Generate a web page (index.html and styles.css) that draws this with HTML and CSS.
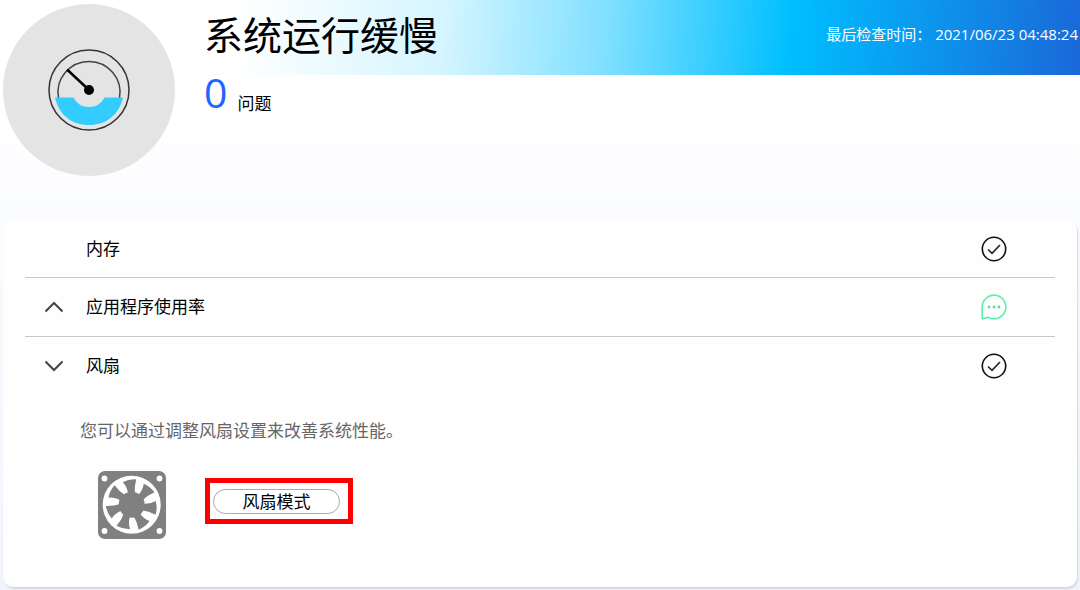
FILE: index.html
```
<!DOCTYPE html>
<html lang="zh-CN">
<head>
<meta charset="utf-8">
<meta name="viewport" content="width=device-width, initial-scale=1">
<title>系统运行缓慢</title>
<link rel="stylesheet" href="styles.css">
</head>
<body>
<header class="hero">
  <div class="badge">
    <svg class="gauge" viewBox="0 0 82 82" aria-hidden="true">
      <circle cx="41" cy="41" r="40" fill="none" stroke="#333" stroke-width="1.500"/>
      <path d="M10.500 49 A31 31 0 1 1 71.500 49" fill="none" stroke="#444" stroke-width="1.500"/>
      <path d="M7 48.500 H25.500 C29 55 34 58 41 58 C48 58 53 55 56.500 48.500 H75 C71 66 58 76 41 76 C24 76 11 66 7 48.500 Z" fill="#33ccff"/>
      <path d="M19 20.500 L41 41" stroke="#000" stroke-width="2.500"/>
      <circle cx="41" cy="41" r="5" fill="#000"/>
    </svg>
  </div>
  <div class="summary">
    <div class="title-row">
      <h1 class="title">系统运行缓慢</h1>
      <p class="checked"><span>最后检查时间：</span><time datetime="2021-06-23T04:48:24">2021/06/23 04:48:24</time></p>
    </div>
    <p class="issues"><span class="count">0</span><span class="unit">问题</span></p>
  </div>
</header>

<main class="card">
  <div class="row">
    <span class="toggle-space"></span>
    <span class="name">内存</span>
    <svg class="status" viewBox="0 0 26 26" role="img" aria-label="正常"><circle cx="13" cy="13" r="11.700" fill="none" stroke="#111" stroke-width="1.600"/><path d="M7 13.500 L11 17.300 L19 9" fill="none" stroke="#222" stroke-width="1.600"/></svg>
  </div>
  <div class="row">
    <button class="toggle" type="button" aria-label="应用程序使用率" aria-expanded="false"><svg class="chevron" viewBox="0 0 20 12" aria-hidden="true"><path d="M1.500 10.500 L10 2 L18.500 10.500"/></svg></button>
    <span class="name">应用程序使用率</span>
    <svg class="status" viewBox="0 0 26 26" role="img" aria-label="消息"><path d="M1.200 24.800 V13 A11.800 11.800 0 1 1 7.500 23.400 Z" fill="none" stroke="#5cf0a5" stroke-width="1.600" stroke-linejoin="round"/><g fill="#5cdd9a"><circle cx="8" cy="13" r="1.400"/><circle cx="13" cy="13" r="1.400"/><circle cx="18" cy="13" r="1.400"/></g></svg>
  </div>
  <div class="row">
    <button class="toggle" type="button" aria-label="风扇" aria-expanded="true"><svg class="chevron" viewBox="0 0 20 12" aria-hidden="true"><path d="M1.500 1.500 L10 10 L18.500 1.500"/></svg></button>
    <span class="name">风扇</span>
    <svg class="status" viewBox="0 0 26 26" role="img" aria-label="正常"><circle cx="13" cy="13" r="11.700" fill="none" stroke="#111" stroke-width="1.600"/><path d="M7 13.500 L11 17.300 L19 9" fill="none" stroke="#222" stroke-width="1.600"/></svg>
  </div>
  <section class="detail">
    <p class="hint">您可以通过调整风扇设置来改善系统性能。</p>
    <div class="fan-row">
      <svg class="fan" viewBox="0 0 68 68" aria-hidden="true">
        <rect width="68" height="68" rx="7" fill="#808080"/>
        <g fill="#fff"><circle cx="6.500" cy="7.500" r="2.900"/><circle cx="61.500" cy="7.500" r="2.900"/><circle cx="6.500" cy="60" r="2.900"/><circle cx="61.500" cy="60" r="2.900"/><circle cx="33.700" cy="33.700" r="29"/></g>
        <g fill="#808080" transform="translate(33.700 33.700)">
          <circle r="13"/>
          <path id="blade" d="M-3.500 -11 Q-4.500 -18 -9 -22.500 Q-3 -26 4.500 -25.500 Q2.500 -18 3.200 -11 Z"/>
          <use href="#blade" transform="rotate(51.430)"/>
          <use href="#blade" transform="rotate(102.860)"/>
          <use href="#blade" transform="rotate(154.290)"/>
          <use href="#blade" transform="rotate(205.710)"/>
          <use href="#blade" transform="rotate(257.140)"/>
          <use href="#blade" transform="rotate(308.570)"/>
        </g>
      </svg>
      <div class="highlight"><button class="mode" type="button">风扇模式</button></div>
    </div>
  </section>
</main>
</body>
</html>
```

FILE: styles.css
```
* { box-sizing: border-box; }

body {
  margin: 0;
  min-height: 100vh;
  padding-bottom: 3px;
  display: flex;
  flex-direction: column;
  background: linear-gradient(#fff 0, #fefeff 140px, #fbfcff 210px, #f2f4fb 100%);
  color: #000;
  font-family: "Noto Sans", "Noto Sans CJK SC", sans-serif;
  font-size: 17px;
  line-height: 24px;
}

h1, p { margin: 0; }

button {
  font: inherit;
  color: inherit;
  cursor: pointer;
}

.hero {
  display: grid;
  grid-template-columns: 172px 1fr;
  column-gap: 29px;
  padding: 0 2px 0 3px;
  min-height: 220px;
  background: linear-gradient(94deg, #fff 22%, #d5f5ff 41%, #80e0ff 56%, #00bfff 73%, #1a68d9 100%) top / 100% 75px no-repeat;
}

.badge {
  height: 172px;
  margin-top: 4px;
  border-radius: 50%;
  background: #e4e4e4;
  display: flex;
  align-items: center;
  justify-content: center;
}

.gauge { width: 82px; height: 82px; }

.title-row {
  height: 75px;
  display: flex;
  justify-content: space-between;
  align-items: flex-start;
}

.title {
  padding-top: 5px;
  font-size: 39px;
  font-weight: 400;
  line-height: 56px;
  font-family: "Noto Sans CJK SC", sans-serif;
}

.checked {
  display: flex;
  gap: 4px;
  padding-top: 22px;
  color: #fff;
  font-family: "Open Sans", "Noto Sans CJK SC", sans-serif;
  font-size: 15px;
  white-space: nowrap;
}

.issues {
  display: flex;
  align-items: flex-start;
  gap: 10px;
}

.count {
  color: #1f66ff;
  font-family: "Open Sans", sans-serif;
  font-size: 41px;
  line-height: 34px;
}

.unit { padding-top: 17px; }

.card {
  flex: 1;
  margin: 0 3px;
  padding: 0 22px 48px;
  border-radius: 10px;
  background: #fefefe;
  box-shadow: 1px 2px 2px #d4d8df;
}

.row {
  height: 57px;
  padding: 0 48px 0 19px;
  display: flex;
  align-items: center;
}

.row + .row {
  height: 59px;
  border-top: 1px solid #c8c8c8;
}

.toggle, .toggle-space { width: 20px; height: 24px; }

.toggle {
  display: flex;
  align-items: center;
  padding: 0;
  border: 0;
  background: none;
}

.chevron {
  width: 20px;
  height: 12px;
  fill: none;
  stroke: #444;
  stroke-width: 2;
}

.name { flex: 1; padding-left: 22px; }

.status { width: 26px; height: 26px; }

.detail { padding: 24px 0 0 55px; }

.hint { color: #666; }

.fan-row {
  display: flex;
  align-items: center;
  gap: 39px;
  padding: 28px 0 0 18px;
}

.fan { width: 68px; height: 68px; }

.highlight {
  margin-bottom: 8px;
  padding: 6px 8px 5px 3px;
  border: 5px solid #f00;
}

.mode {
  display: block;
  width: 127px;
  height: 25px;
  padding: 0;
  border: 1px solid #aaa;
  border-radius: 13px;
  background: #fff;
  line-height: 23px;
}
```
